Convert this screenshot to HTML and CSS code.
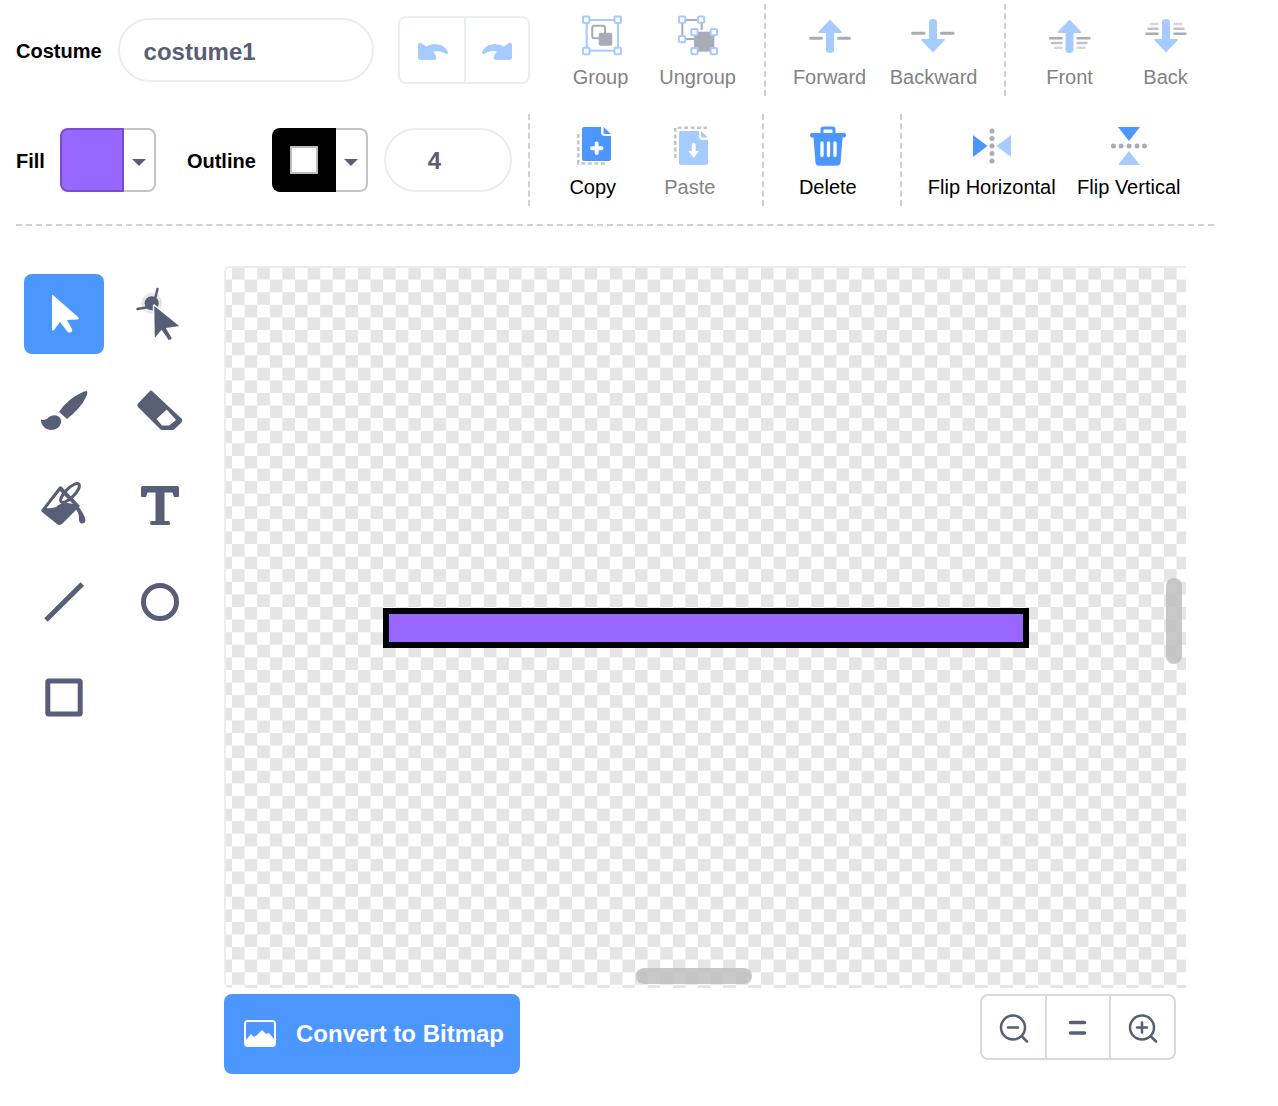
FILE: index.html
```html
<!DOCTYPE html>
<html lang="en">

<head>
  <meta charset="UTF-8">
  <title>Paint editor</title>
  <link rel="stylesheet" href="styles.css">
</head>

<body>
  <div class="editor">
    <!-- first row: name, undo, order -->
    <div class="row">
      <span class="label">Costume</span>
      <div class="field field-name">costume1</div>
      <div class="undo-group">
        <button class="undo-btn">
          <svg class="undo-icon" width="30" height="18" viewBox="0 0 30 18"><path class="light" d="M0 3Q0 0 3 1L8 4.500Q16 0 24 3.500Q28 5.500 30 10.500Q30 13 28 12Q22 7.500 15 9.500L18 13.500Q19 18 16 18H3Q0 18 0 15Z"/></svg>
        </button>
        <button class="undo-btn">
          <svg width="30" height="18" viewBox="0 0 30 18"><path class="light" transform="matrix(-1 0 0 1 30 0)" d="M0 3Q0 0 3 1L8 4.500Q16 0 24 3.500Q28 5.500 30 10.500Q30 13 28 12Q22 7.500 15 9.500L18 13.500Q19 18 16 18H3Q0 18 0 15Z"/></svg>
        </button>
      </div>

      <div class="btn-group group-a">
        <button class="tool-btn off">
          <svg class="icon" viewBox="0 0 40 40">
            <rect class="line-light" x="5.700" y="4" width="31.300" height="30.700"/>
            <rect class="line-gray" x="11.300" y="9.700" width="12.700" height="12.600" rx="2"/>
            <rect class="gray" x="17.700" y="16.700" width="13.600" height="13" rx="2"/>
            <g class="handle">
              <rect x="2" y="0.500" width="6.500" height="6.500" rx="1"/><rect x="33.500" y="0.500" width="6.500" height="6.500" rx="1"/>
              <rect x="2" y="31.800" width="6.500" height="6.500" rx="1"/><rect x="33.500" y="31.800" width="6.500" height="6.500" rx="1"/>
            </g>
          </svg>
          <span>Group</span>
        </button>
        <button class="tool-btn off nudge">
          <svg class="icon" viewBox="0 0 40 40">
            <path class="line-gray" d="M16 23H4.300V4H23.700V14"/>
            <rect class="gray" x="16" y="15.700" width="20.300" height="20"/>
            <g class="handle">
              <rect x="1" y="0.500" width="6.300" height="6.300" rx="1"/><rect x="20" y="0.500" width="6.300" height="6.300" rx="1"/>
              <rect x="1" y="20" width="6.300" height="6.300" rx="1"/>
              <rect x="13.300" y="13" width="6.300" height="6.300" rx="1"/><rect x="32.700" y="13" width="6.300" height="6.300" rx="1"/>
              <rect x="13.300" y="32" width="6.300" height="6.300" rx="1"/><rect x="32.700" y="32" width="6.300" height="6.300" rx="1"/>
            </g>
          </svg>
          <span>Ungroup</span>
        </button>
      </div>

      <div class="btn-group group-b">
        <button class="tool-btn off wide">
          <svg class="icon" viewBox="0 0 40 40">
            <path class="dash" d="M0.500 22.300H11.500M28.500 22.300H39.500"/>
            <path class="light" d="M20 3.500L31.500 15.500Q32.500 17 31 17H24V34Q24 37 20 37Q16 37 16 34V17H9Q7.500 17 8.500 15.500Z"/>
          </svg>
          <span>Forward</span>
        </button>
        <button class="tool-btn off wide">
          <svg class="icon" viewBox="0 0 40 40">
            <g transform="translate(-1 0)">
              <path class="dash" d="M-0.500 17.300H11M28.500 17.300H40"/>
              <path class="light" d="M20 36.500L31.500 24.500Q32.500 23 31 23H24V6Q24 3 20 3Q16 3 16 6V23H9Q7.500 23 8.500 24.500Z"/>
            </g>
          </svg>
          <span>Backward</span>
        </button>
      </div>

      <div class="btn-group group-c">
        <button class="tool-btn off">
          <svg class="icon" viewBox="0 0 40 40">
            <g transform="translate(-0.500 0)">
              <path class="dash thin" d="M0.500 22.300H12M28 22.300H40"/>
              <path class="dash thin mid" d="M2.500 27H12M28 27H37"/>
              <path class="dash thin pale" d="M5.500 31.700H12M28 31.700H35"/>
              <path class="light" d="M20 3.500L31.500 15.500Q32.500 17 31 17H24V34Q24 37 20 37Q16 37 16 34V17H9Q7.500 17 8.500 15.500Z"/>
            </g>
          </svg>
          <span>Front</span>
        </button>
        <button class="tool-btn off">
          <svg class="icon" viewBox="0 0 40 40">
            <path class="dash thin" d="M0.500 17.700H11.500M28.500 17.700H39.500"/>
            <path class="dash thin mid" d="M2.500 12.700H11.500M28.500 12.700H37.500"/>
            <path class="dash thin pale" d="M5 8H11.500M28.500 8H35"/>
            <path class="light" d="M20 36.500L31.500 24.500Q32.500 23 31 23H24V6Q24 3 20 3Q16 3 16 6V23H9Q7.500 23 8.500 24.500Z"/>
          </svg>
          <span>Back</span>
        </button>
      </div>
    </div>

    <!-- second row: colours, stroke width, actions -->
    <div class="row row-two">
      <span class="label label-fill">Fill</span>
      <div class="swatch">
        <div class="swatch-color swatch-fill"></div>
        <div class="swatch-arrow"></div>
      </div>
      <span class="label label-outline">Outline</span>
      <div class="swatch">
        <div class="swatch-color swatch-outline"><div class="outline-hole"></div></div>
        <div class="swatch-arrow"></div>
      </div>
      <div class="field field-width">4</div>

      <div class="btn-group group-d">
        <button class="tool-btn">
          <svg class="icon" viewBox="0 0 40 40">
            <path class="dash-dotted" d="M5.300 8V37.500H34"/>
            <path class="blue" d="M11 1H28V6Q28 10 32 10H38V33Q38 35 36 35H11Q9 35 9 33V3Q9 1 11 1Z"/>
            <path class="blue" d="M30.500 1L38 8H32Q30.500 8 30.500 6.500Z"/>
            <path class="white-line" d="M23.700 17.500V27M19 22.300H28.500"/>
          </svg>
          <span>Copy</span>
        </button>
        <button class="tool-btn off nudge">
          <svg class="icon" viewBox="0 0 40 40">
            <path class="dash-dotted" d="M5.300 32V1.800H37"/>
            <path class="light" d="M11 5H29V10Q29 14 33 14H38V37Q38 39 36 39H11Q9 39 9 37V7Q9 5 11 5Z"/>
            <path class="light" d="M31 5L38 11.500H33Q31 11.500 31 10Z"/>
            <path class="white-line" d="M23.700 19V27"/>
            <path class="white" d="M18.500 25H29L23.700 32Z"/>
          </svg>
          <span>Paste</span>
        </button>
      </div>

      <div class="btn-group group-e">
        <button class="tool-btn">
          <svg class="icon" viewBox="0 0 40 40">
            <g transform="translate(-1 0)">
              <path class="blue-line" d="M15 8V3.500Q15 2 16.500 2H25.500Q27 2 27 3.500V8"/>
              <path class="blue" d="M5 7H37Q39 7 39 9.300Q39 11.500 37 11.500H5Q3 11.500 3 9.300Q3 7 5 7Z"/>
              <path class="blue" d="M6.500 11H35.700L33.500 37Q33 39.700 30.500 39.700H11.500Q9 39.700 8.500 37Z"/>
              <path class="white-bar" d="M15 17V29.500M21.500 17V29.500M28 17V29.500"/>
            </g>
          </svg>
          <span>Delete</span>
        </button>
      </div>

      <div class="btn-group group-f">
        <button class="tool-btn flip">
          <svg class="icon" viewBox="0 0 40 40">
            <path class="blue" d="M1 9L15.500 20L1 31Z"/>
            <path class="light" d="M39 9L24.500 20L39 31Z"/>
            <g class="dots">
              <circle cx="20" cy="5" r="2.500"/><circle cx="20" cy="12.500" r="2.500"/><circle cx="20" cy="20" r="2.500"/><circle cx="20" cy="27.500" r="2.500"/><circle cx="20" cy="35" r="2.500"/>
            </g>
          </svg>
          <span>Flip Horizontal</span>
        </button>
        <button class="tool-btn flip nudge">
          <svg class="icon" viewBox="0 0 40 40">
            <path class="blue" d="M9 1H31L20 15Z"/>
            <path class="light" d="M9 39H31L20 25Z"/>
            <g class="dots">
              <circle cx="4.500" cy="20" r="2.500"/><circle cx="12" cy="20" r="2.500"/><circle cx="20" cy="20" r="2.500"/><circle cx="28" cy="20" r="2.500"/><circle cx="35.500" cy="20" r="2.500"/>
            </g>
          </svg>
          <span>Flip Vertical</span>
        </button>
      </div>
    </div>

    <div class="divider"></div>

    <div class="workspace">
      <div class="tools">
        <div class="tool tool-active">
          <svg viewBox="0 0 60 60" class="tool-icon">
            <path class="white" d="M18 12Q18 10 20 12L44 33Q46 35 43 35.500L33 36L38 45Q39 48 36 48.500Q34 49 33 47L26 38L20 46Q18 47.500 18 45Z"/>
          </svg>
        </div>
        <div class="tool">
          <svg viewBox="0 0 60 60" class="tool-icon">
            <circle class="halo" cx="21.700" cy="19.300" r="10.500"/>
            <circle class="ink" cx="21.700" cy="19.300" r="7"/>
            <path class="ink-line" d="M25.500 13L27.500 5M16 23.500L7.500 25"/>
            <path class="ink halo-stroke" d="M23.500 22Q23.500 20 25.500 22L49 41Q50.500 42.500 48 43L37 44.500L42 53Q43 56 40 56.500Q38 57 37 55L31.500 47L26 53.500Q24 55 24 53Z"/>
          </svg>
        </div>
        <div class="tool">
          <svg viewBox="0 0 60 60" class="tool-icon">
            <path class="ink" d="M53 11Q54 13 52 17Q47 28 33 39L25 32Q33 19 50 11.500Z"/>
            <path class="ink" d="M7 39.500Q12 41 15 37Q19 34 24 36Q28 39 27 43Q25 50 17 50Q9 49 7 42Z"/>
          </svg>
        </div>
        <div class="tool">
          <svg viewBox="0 0 60 60" class="tool-icon">
            <path class="ink" d="M22 11L52 39Q53 41 51 43L44 49.500Q43.500 50 42 50H32Q31 50 30 49L8 27Q6.500 25 8 23.500L20 11Q21 10 22 11Z"/>
            <path class="white" d="M26.500 39L36.700 29.500L46 40L39 45.500H32Z"/>
          </svg>
        </div>
        <div class="tool">
          <svg viewBox="0 0 60 60" class="tool-icon">
            <path class="ink" d="M8 33L25 11Q26.500 9.500 28 11L46 30L28 48Q25 50 23 48L8 36Q6.500 34.500 8 33Z"/>
            <path class="white" d="M12.500 32L26 15L39 28Q28 25 22 31Q16 33 12.500 32Z"/>
            <ellipse class="ink-line thin-ink" cx="36" cy="17" rx="12.500" ry="4.500" transform="rotate(-45 36 17)"/>
            <path class="ink" d="M43 29Q50 37 51.500 44Q51 48 47.500 47.500Q44.500 46.500 45 42Q45 37 41 32Z"/>
          </svg>
        </div>
        <div class="tool">
          <svg viewBox="0 0 60 60" class="tool-icon">
            <path class="ink" d="M11 12Q11 10 13 10H47Q49 10 49 12V20Q49 21 48 21H44L42.500 16.500H34.500V45H38Q40 45 40 47V48Q40 49 38 49H22Q20 49 20 47Q20 45 22 45H25.500V16.500H17.500L16 21H12Q11 21 11 20Z"/>
          </svg>
        </div>
        <div class="tool">
          <svg viewBox="0 0 60 60" class="tool-icon">
            <path class="ink-line wide-ink" d="M12 48L48.300 12"/>
          </svg>
        </div>
        <div class="tool">
          <svg viewBox="0 0 60 60" class="tool-icon">
            <circle class="ink-line wide-ink" cx="30" cy="30" r="16.500"/>
          </svg>
        </div>
        <div class="tool">
          <svg viewBox="0 0 60 60" class="tool-icon">
            <rect class="ink-line wide-ink" x="13.800" y="13" width="32.400" height="33" rx="1"/>
          </svg>
        </div>
      </div>

      <div class="stage">
        <div class="canvas">
          <div class="shape"></div>
          <div class="scroll scroll-v"></div>
          <div class="scroll scroll-h"></div>
        </div>
        <div class="bottom-bar">
          <button class="convert">
            <svg width="32" height="28" viewBox="0 0 32 28">
              <rect class="white-outline" x="1" y="1" width="30" height="25" rx="3"/>
              <path class="white" d="M2 20L7 14L10 17L13 15L18 10L22 14L25 13L30 19V24Q30 27 27 27H5Q2 27 2 24Z"/>
            </svg>
            <span>Convert to Bitmap</span>
          </button>
          <div class="zoom-group">
            <button class="zoom-btn">
              <svg width="40" height="40" viewBox="0 0 40 40">
                <circle class="zoom-line" cx="20" cy="20.500" r="12"/>
                <path class="zoom-line" d="M15 20.500H25M29 29.500L34 34.500"/>
              </svg>
            </button>
            <button class="zoom-btn">
              <svg width="40" height="40" viewBox="0 0 40 40">
                <path class="zoom-line thick" d="M12.500 15.500H26.500M12.500 26H26.500"/>
              </svg>
            </button>
            <button class="zoom-btn">
              <svg width="40" height="40" viewBox="0 0 40 40">
                <circle class="zoom-line" cx="19" cy="20.500" r="12"/>
                <path class="zoom-line" d="M14 20.500H24M19 15.500V25.500M28 29.500L33 34.500"/>
              </svg>
            </button>
          </div>
        </div>
      </div>
    </div>
  </div>
</body>

</html>
```

FILE: styles.css
```css
* {
  margin: 0;
  padding: 0;
  box-sizing: border-box;
}

body {
  background: #fff;
  font-family: "Liberation Sans", Arial, sans-serif;
  color: #000;
}

button {
  font-family: inherit;
  background: none;
  border: none;
}

.editor {
  padding: 4px 0 0 16px;
  width: 1214px;
}

.row {
  display: flex;
  align-items: center;
  height: 92px;
}

.row-two {
  margin-top: 18px;
}

.label {
  font-size: 20px;
  font-weight: bold;
  margin-right: 16px;
  padding-top: 2px;
}

.label-fill {
  margin-right: 15px;
}

.label-outline {
  margin-left: 31px;
}

.field {
  height: 64px;
  border: 2px solid #e9eef2;
  border-radius: 32px;
  display: flex;
  align-items: center;
  font-size: 24px;
  font-weight: bold;
  color: #575e75;
}

.field-name {
  width: 256px;
  padding: 3px 0 0 24px;
}

.field-width {
  width: 128px;
  margin-left: 16px;
  padding: 2px 0 0 42px;
}

.undo-group {
  display: flex;
  width: 132px;
  height: 68px;
  margin-left: 24px;
  border: 2px solid #e9eef2;
  border-radius: 8px;
}

.undo-btn {
  width: 64px;
  display: flex;
  align-items: center;
  justify-content: center;
  padding-top: 2px;
}

.undo-icon {
  margin-left: 3px;
}

.undo-btn + .undo-btn {
  border-left: 2px solid #e9eef2;
}

/* toolbar buttons */
.btn-group {
  display: flex;
  height: 92px;
}

.group-a {
  margin-left: 23px;
  padding-right: 18px;
}

.group-b {
  border-left: 2px dashed #d0d0d0;
  padding: 0 18px 0 12px;
}

.group-c {
  border-left: 2px dashed #d0d0d0;
  padding-left: 16px;
}

.group-d {
  margin-left: 16px;
  border-left: 2px dashed #d0d0d0;
  padding: 0 24px 0 15px;
}

.group-e {
  border-left: 2px dashed #d0d0d0;
  padding: 0 24px 0 16px;
}

.group-f {
  border-left: 2px dashed #d0d0d0;
  padding-left: 22px;
}

.tool-btn {
  width: 96px;
  padding-top: 12px;
  display: flex;
  flex-direction: column;
  align-items: center;
  font-size: 20px;
  color: #000;
}

.tool-btn.nudge {
  margin-left: 1px;
}

.tool-btn.wide {
  width: 104px;
}

.tool-btn.flip {
  width: 136px;
}

.tool-btn.off {
  color: #838383;
}

.tool-btn span {
  margin-top: 9px;
  line-height: 24px;
  white-space: nowrap;
}

.icon {
  display: block;
  width: 40px;
  height: 40px;
  overflow: visible;
}

.light { fill: #a6cbff; }
.blue { fill: #4c97ff; }
.white { fill: #fff; }
.gray { fill: #a9abb5; }
.ink { fill: #575e75; }
.halo { fill: #e6e7eb; }
.dots { fill: #a9abb5; }
.handle rect { fill: #fff; stroke: #a6cbff; stroke-width: 2; }

.line-light { fill: none; stroke: #a6cbff; stroke-width: 2; }
.line-gray { fill: none; stroke: #a9abb5; stroke-width: 2; }
.dash { fill: none; stroke: #a9abb5; stroke-width: 3; stroke-linecap: round; }
.dash.thin { stroke-width: 2.500; }
.dash.mid { stroke: #c0c2c9; }
.dash.pale { stroke: #d5d6da; }
.dash-dotted { fill: none; stroke: #c4c5cc; stroke-width: 2.500; stroke-dasharray: 4 2.500; }
.white-line { fill: none; stroke: #fff; stroke-width: 4; stroke-linecap: round; }
.white-bar { fill: none; stroke: #fff; stroke-width: 3.300; stroke-linecap: round; }
.blue-line { fill: none; stroke: #4c97ff; stroke-width: 3; }
.white-outline { fill: none; stroke: #fff; stroke-width: 2; }

/* colour pickers */
.swatch {
  display: flex;
  width: 96px;
  height: 64px;
}

.swatch-color {
  width: 64px;
  border-radius: 8px 0 0 8px;
  display: flex;
  align-items: center;
  justify-content: center;
}

.swatch-fill {
  background: #9966ff;
  border: 2px solid #774dcb;
}

.swatch-outline {
  background: #000;
}

.outline-hole {
  width: 28px;
  height: 28px;
  background: #fff;
  border: 2px solid #bbb;
}

.swatch-arrow {
  flex: 1;
  border: 2px solid #c4c4c4;
  border-left: none;
  border-radius: 0 8px 8px 0;
  display: flex;
  align-items: center;
  justify-content: center;
}

.swatch-arrow::after {
  content: "";
  margin-top: 4px;
  border-left: 7px solid transparent;
  border-right: 7px solid transparent;
  border-top: 7px solid #575e75;
}

.divider {
  margin-top: 18px;
  border-top: 2px dashed #d0d0d0;
}

/* tools and canvas */
.workspace {
  display: flex;
  padding-top: 40px;
}

.tools {
  display: grid;
  grid-template-columns: 80px 80px;
  grid-auto-rows: 80px;
  gap: 16px;
  margin: 8px 0 0 8px;
  align-self: flex-start;
}

.tool {
  display: flex;
  align-items: center;
  justify-content: center;
  border-radius: 8px;
}

.tool-active {
  background: #4c97ff;
}

.tool-icon {
  width: 60px;
  height: 60px;
  flex: none;
}

.ink-line { fill: none; stroke: #575e75; stroke-width: 2.500; stroke-linecap: round; }
.ink-line.thin-ink { stroke-width: 3; }
.ink-line.wide-ink { stroke-width: 5; stroke-linecap: butt; }
.halo-stroke { stroke: #fff; stroke-width: 1.500; }

.stage {
  width: 962px;
  margin-left: 24px;
}

.canvas {
  position: relative;
  height: 722px;
  border-left: 2px solid #e9eef2;
  border-top: 2px solid #e9eef2;
  border-radius: 6px 0 0 6px;
  background: conic-gradient(#e5e5e5 25%, #fff 0 50%, #e5e5e5 0 75%, #fff 0) -6.600px -1px / 25.200px 25.200px;
}

.shape {
  position: absolute;
  left: 157px;
  top: 340px;
  width: 646px;
  height: 40px;
  background: #9966ff;
  border: 6px solid #000;
}

.scroll {
  position: absolute;
  background: rgba(190, 190, 190, 0.85);
  border-radius: 8px;
}

.scroll-v {
  left: 940px;
  top: 310px;
  width: 16px;
  height: 86px;
}

.scroll-h {
  left: 410px;
  top: 700px;
  width: 116px;
  height: 16px;
}

.bottom-bar {
  display: flex;
  justify-content: space-between;
  align-items: flex-start;
  margin-top: 6px;
  padding-right: 10px;
}

.convert {
  display: flex;
  align-items: center;
  width: 296px;
  height: 80px;
  padding-left: 20px;
  background: #4c97ff;
  border-radius: 8px;
  color: #fff;
  font-size: 24px;
  font-weight: bold;
}

.convert span {
  margin-left: 20px;
  white-space: nowrap;
}

.zoom-group {
  display: flex;
  width: 196px;
  height: 66px;
  border: 2px solid #d9d9d9;
  border-radius: 8px;
}

.zoom-btn {
  flex: 1;
  display: flex;
  align-items: center;
  justify-content: center;
}

.zoom-btn + .zoom-btn {
  border-left: 2px solid #d9d9d9;
}

.zoom-line { fill: none; stroke: #575e75; stroke-width: 2.500; stroke-linecap: round; }
.zoom-line.thick { stroke-width: 3.500; }
```
